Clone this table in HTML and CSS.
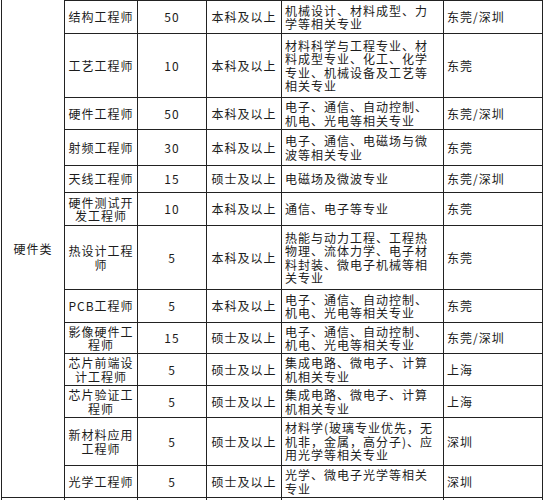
FILE: index.html
```html
<!DOCTYPE html>
<html lang="zh-CN">
<head>
<meta charset="utf-8">
<title>招聘岗位</title>
<link rel="stylesheet" href="styles.css">
</head>
<body>
<table class="jobs">
  <colgroup>
    <col class="c-cat"><col class="c-title"><col class="c-num"><col class="c-edu"><col class="c-major"><col class="c-loc">
  </colgroup>
  <tbody>
    <tr class="r1 first">
      <td class="cat" rowspan="13">硬件类</td>
      <td class="title">结构工程师</td><td class="num">50</td><td class="edu">本科及以上</td>
      <td class="major">机械设计、材料成型、力<br>学等相关专业</td><td class="loc">东莞/深圳</td>
    </tr>
    <tr class="r2">
      <td class="title">工艺工程师</td><td class="num">10</td><td class="edu">本科及以上</td>
      <td class="major">材料科学与工程专业、材<br>料成型专业、化工、化学<br>专业、机械设备及工艺等<br>相关专业</td><td class="loc">东莞</td>
    </tr>
    <tr class="r3">
      <td class="title">硬件工程师</td><td class="num">50</td><td class="edu">本科及以上</td>
      <td class="major">电子、通信、自动控制、<br>机电、光电等相关专业</td><td class="loc">东莞/深圳</td>
    </tr>
    <tr class="r4">
      <td class="title">射频工程师</td><td class="num">30</td><td class="edu">本科及以上</td>
      <td class="major">电子、通信、电磁场与微<br>波等相关专业</td><td class="loc">东莞</td>
    </tr>
    <tr class="r5">
      <td class="title">天线工程师</td><td class="num">15</td><td class="edu">硕士及以上</td>
      <td class="major">电磁场及微波专业</td><td class="loc">东莞/深圳</td>
    </tr>
    <tr class="r6">
      <td class="title">硬件测试开<br>发工程师</td><td class="num">10</td><td class="edu">本科及以上</td>
      <td class="major">通信、电子等专业</td><td class="loc">东莞</td>
    </tr>
    <tr class="r7">
      <td class="title">热设计工程<br>师</td><td class="num">5</td><td class="edu">本科及以上</td>
      <td class="major">热能与动力工程、工程热<br>物理、流体力学、电子材<br>料封装、微电子机械等相<br>关专业</td><td class="loc">东莞</td>
    </tr>
    <tr class="r8">
      <td class="title">PCB工程师</td><td class="num">5</td><td class="edu">本科及以上</td>
      <td class="major">电子、通信、自动控制、<br>机电、光电等相关专业</td><td class="loc">东莞</td>
    </tr>
    <tr class="r9">
      <td class="title">影像硬件工<br>程师</td><td class="num">15</td><td class="edu">硕士及以上</td>
      <td class="major">电子、通信、自动控制、<br>机电、光电等相关专业</td><td class="loc">东莞/深圳</td>
    </tr>
    <tr class="r10">
      <td class="title">芯片前端设<br>计工程师</td><td class="num">5</td><td class="edu">硕士及以上</td>
      <td class="major">集成电路、微电子、计算<br>机相关专业</td><td class="loc">上海</td>
    </tr>
    <tr class="r11">
      <td class="title">芯片验证工<br>程师</td><td class="num">5</td><td class="edu">硕士及以上</td>
      <td class="major">集成电路、微电子、计算<br>机相关专业</td><td class="loc">上海</td>
    </tr>
    <tr class="r12">
      <td class="title">新材料应用<br>工程师</td><td class="num">5</td><td class="edu">硕士及以上</td>
      <td class="major">材料学(玻璃专业优先，无<br>机非，金属，高分子)、应<br>用光学等相关专业</td><td class="loc">深圳</td>
    </tr>
    <tr class="r13">
      <td class="title">光学工程师</td><td class="num">5</td><td class="edu">硕士及以上</td>
      <td class="major">光学、微电子光学等相关<br>专业</td><td class="loc">深圳</td>
    </tr>
    <tr class="r14">
      <td class="cat"></td><td class="title"></td><td class="num"></td><td class="edu"></td><td class="major"></td><td class="loc"></td>
    </tr>
  </tbody>
</table>
</body>
</html>
```

FILE: styles.css
```css
html, body {
  margin: 0;
  padding: 0;
  background: #ffffff;
}

body {
  overflow: hidden;
  font-family: "Noto Sans CJK SC", "Noto Sans", "DejaVu Sans", sans-serif;
  font-size: 12px;
  letter-spacing: 1px;
  color: #1c1c1c;
}

.jobs {
  margin-left: 1px;
  border-collapse: separate;
  border-spacing: 0;
  table-layout: fixed;
  width: 542px;
  border-left: 1px solid #222;
}

.c-cat { width: 63px; }
.c-title { width: 73px; }
.c-num { width: 69px; }
.c-edu { width: 75px; }
.c-major { width: 162px; }
.c-loc { width: 99px; }

.jobs td {
  box-sizing: border-box;
  padding: 0 3px;
  border-right: 1px solid #222;
  border-bottom: 1px solid #222;
  line-height: 13.4px;
  vertical-align: middle;
  white-space: nowrap;
  overflow: hidden;
}

.first td.title,
.first td.num,
.first td.edu,
.first td.major,
.first td.loc {
  border-top: 1px solid #222;
}

.cat { text-align: center; }
.title { text-align: center; padding: 0 0 0 2px; }
.num { text-align: center; }
.edu { text-align: center; }
.major { text-align: left; padding-left: 4px; }
.loc { text-align: left; padding-left: 3px; }

.r1 { height: 34px; }
.r2 { height: 64px; }
.r3 { height: 32px; }
.r4 { height: 36px; }
.r5 { height: 27px; }
.r6 { height: 33px; }
.r7 { height: 64px; }
.r8 { height: 33px; }
.r9 { height: 31px; }
.r10 { height: 32px; }
.r11 { height: 32px; }
.r12 { height: 48px; }
.r13 { height: 32px; }
.r14 { height: 30px; }
```
